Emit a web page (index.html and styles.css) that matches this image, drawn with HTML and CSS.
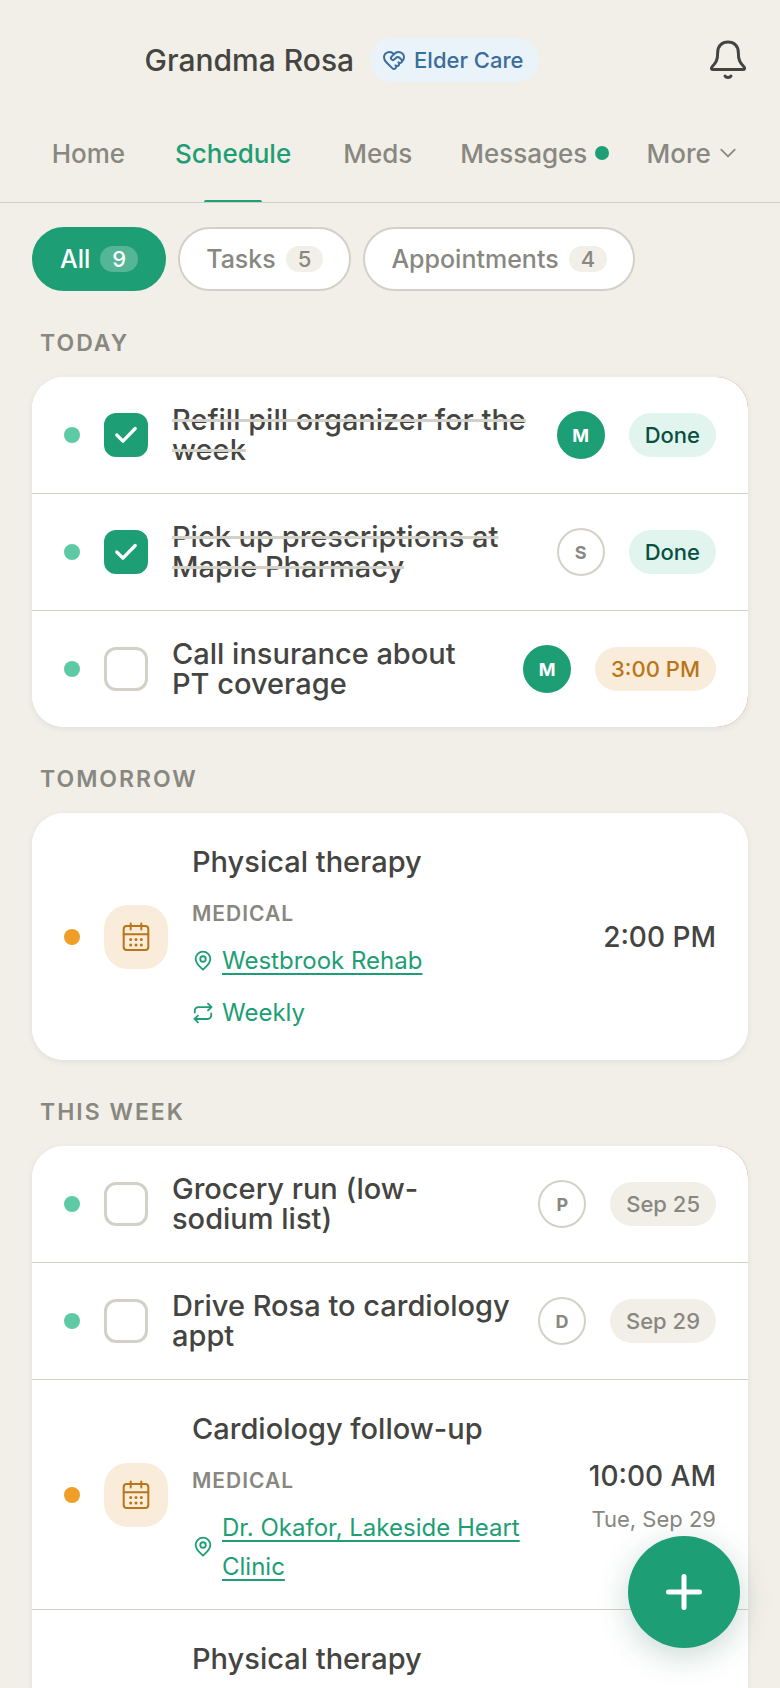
FILE: index.html
```
<!DOCTYPE html>
<html lang="en">
<head>
    <meta charset="UTF-8">
    <meta name="viewport" content="width=device-width, initial-scale=1.0">
    <title>Schedule - Grandma Rosa</title>
    <link rel="stylesheet" href="styles.css">
</head>
<body>
    <!-- shared icons -->
    <svg class="sprite" aria-hidden="true">
        <symbol id="i-check" viewBox="0 0 24 24"><path d="M3.500 12l5.700 5.700L20.500 6"/></symbol>
        <symbol id="i-calendar" viewBox="0 0 32 32">
            <rect x="3.700" y="5" width="24.600" height="24" rx="3"/>
            <path d="M3.700 13.300h24.600M10.700 2.500v6M21.300 2.500v6"/>
            <path class="dots" d="M10.700 18.500h.01M16 18.500h.01M21.300 18.500h.01M10.700 24h.01M16 24h.01M21.300 24h.01"/>
        </symbol>
        <symbol id="i-pin" viewBox="0 0 20 24">
            <path d="M10 21.500C7.500 19 2 15 2 9.800a8 8 0 0 1 16 0C18 15 12.500 19 10 21.500z"/>
            <circle cx="10" cy="9.800" r="3"/>
        </symbol>
        <symbol id="i-repeat" viewBox="0 0 24 24">
            <path d="M3 11.500V9.500a4 4 0 0 1 4-4h14M17.500 1.800L21.300 5.500l-3.800 3.700M21 12.500v2a4 4 0 0 1-4 4H3M6.500 22.200L2.700 18.500l3.800-3.700"/>
        </symbol>
    </svg>

    <header class="topbar">
        <div class="person">
            <h1>Grandma Rosa</h1>
            <span class="care-tag">
                <svg viewBox="0 0 24 24"><path d="M19.414 14.414C21 12.828 22 11.500 22 9.500a5.500 5.500 0 0 0-9.591-3.676.6.6 0 0 1-.818.001A5.500 5.500 0 0 0 2 9.500c0 2.300 1.500 4 3 5.500l5.535 5.362a2 2 0 0 0 2.879.052 2.120 2.120 0 0 0-.004-3 2.124 2.124 0 1 0 3-3 2.124 2.124 0 0 0 3.004 0 2 2 0 0 0 0-2.828l-1.881-1.882a2.410 2.410 0 0 0-3.409 0l-1.710 1.710a2 2 0 0 1-2.828 0 2 2 0 0 1 0-2.828l2.823-2.762"/></svg>
                Elder Care
            </span>
        </div>
        <button class="bell" aria-label="Notifications">
            <svg viewBox="0 0 44 44"><path d="M22 4c-6.200 0-10.300 4.200-10.300 10.200 0 8.300-2 10.800-5.400 14.300-1.600 1.700-1 3 .9 3h29.600c1.900 0 2.500-1.300.9-3-3.400-3.500-5.400-6-5.400-14.300C32.300 8.200 28.200 4 22 4zM19 38c1.200 2 4.800 2 6 0"/></svg>
        </button>
    </header>

    <nav class="tabs">
        <a href="#home">Home</a>
        <a href="#schedule" class="active">Schedule</a>
        <a href="#meds">Meds</a>
        <a href="#messages">Messages <span class="unread"></span></a>
        <a href="#more">More <svg class="chevron" viewBox="0 0 16 16"><path d="M2 5l6 6 6-6"/></svg></a>
    </nav>

    <main>
        <div class="chips">
            <button class="chip active">All <span class="count">9</span></button>
            <button class="chip">Tasks <span class="count">5</span></button>
            <button class="chip">Appointments <span class="count">4</span></button>
        </div>

        <section>
            <h2>TODAY</h2>
            <div class="card swipeable">
                <div class="row task">
                    <span class="dot"></span>
                    <label class="check"><input type="checkbox" id="t1" checked><svg><use href="#i-check"/></svg></label>
                    <label class="title done" for="t1">Refill pill organizer for the week</label>
                    <span class="avatar me">M</span>
                    <span class="pill green">Done</span>
                </div>
                <div class="row task">
                    <span class="dot"></span>
                    <label class="check"><input type="checkbox" id="t2" checked><svg><use href="#i-check"/></svg></label>
                    <label class="title done" for="t2">Pick up prescriptions at Maple Pharmacy</label>
                    <span class="avatar">S</span>
                    <span class="pill green">Done</span>
                </div>
                <div class="row task">
                    <span class="dot"></span>
                    <label class="check"><input type="checkbox" id="t3"><svg><use href="#i-check"/></svg></label>
                    <label class="title" for="t3">Call insurance about PT coverage</label>
                    <span class="avatar me">M</span>
                    <span class="pill amber">3:00 PM</span>
                </div>
            </div>
        </section>

        <section>
            <h2>TOMORROW</h2>
            <div class="card">
                <div class="row visit">
                    <span class="dot orange"></span>
                    <span class="tile"><svg><use href="#i-calendar"/></svg></span>
                    <div class="info">
                        <h3>Physical therapy</h3>
                        <p class="kind">MEDICAL</p>
                        <p class="place"><svg><use href="#i-pin"/></svg><a href="#map">Westbrook Rehab</a></p>
                        <p class="repeat"><svg><use href="#i-repeat"/></svg>Weekly</p>
                    </div>
                    <div class="when"><strong>2:00 PM</strong></div>
                </div>
            </div>
        </section>

        <section>
            <h2>THIS WEEK</h2>
            <div class="card swipeable">
                <div class="row task">
                    <span class="dot"></span>
                    <label class="check"><input type="checkbox" id="t4"><svg><use href="#i-check"/></svg></label>
                    <label class="title" for="t4">Grocery run (low-sodium list)</label>
                    <span class="avatar">P</span>
                    <span class="pill">Sep 25</span>
                </div>
                <div class="row task">
                    <span class="dot"></span>
                    <label class="check"><input type="checkbox" id="t5"><svg><use href="#i-check"/></svg></label>
                    <label class="title" for="t5">Drive Rosa to cardiology appt</label>
                    <span class="avatar">D</span>
                    <span class="pill">Sep 29</span>
                </div>
                <div class="row visit">
                    <span class="dot orange"></span>
                    <span class="tile"><svg><use href="#i-calendar"/></svg></span>
                    <div class="info">
                        <h3>Cardiology follow-up</h3>
                        <p class="kind">MEDICAL</p>
                        <p class="place"><svg><use href="#i-pin"/></svg><a href="#map">Dr. Okafor, Lakeside Heart Clinic</a></p>
                    </div>
                    <div class="when"><strong>10:00 AM</strong><span>Tue, Sep 29</span></div>
                </div>
                <div class="row visit">
                    <span class="dot orange"></span>
                    <span class="tile"><svg><use href="#i-calendar"/></svg></span>
                    <div class="info">
                        <h3>Physical therapy</h3>
                        <p class="kind">MEDICAL</p>
                        <p class="place"><svg><use href="#i-pin"/></svg><a href="#map">Westbrook Rehab</a></p>
                        <p class="repeat"><svg><use href="#i-repeat"/></svg>Weekly</p>
                    </div>
                    <div class="when"><strong>2:00 PM</strong></div>
                </div>
            </div>
        </section>
    </main>

    <button class="fab" aria-label="Add"><svg viewBox="0 0 36 36"><path d="M18 2.500v31M2.500 18h31"/></svg></button>
</body>
</html>
```
FILE: styles.css
```
* {
    box-sizing: border-box;
}
body {
    margin: 0;
    height: 100vh;
    display: flex;
    flex-direction: column;
    background-color: #f1efe8;
    color: #444441;
    font-family: Inter, "Liberation Sans", sans-serif;
    font-variation-settings: "opsz" 14;
    font-size: 24px;
}
h1, h2, h3, p {
    margin: 0;
    font-weight: 500;
}
button {
    font: inherit;
    font-variation-settings: inherit;
    border: none;
    cursor: pointer;
}
svg {
    flex: none;
    fill: none;
    stroke: currentColor;
    stroke-width: 2;
    stroke-linecap: round;
    stroke-linejoin: round;
}
.sprite {
    display: none;
}
.topbar {
    display: flex;
    align-items: center;
    padding: 16px 8px 0 0;
    flex: none;
}
.person {
    flex: 1;
    display: flex;
    align-items: center;
    justify-content: center;
    gap: 16px;
}
h1 {
    font-size: 30px;
}
.care-tag {
    display: flex;
    align-items: center;
    gap: 8px;
    height: 44px;
    padding: 0 16px 0 12px;
    border-radius: 22px;
    background-color: #eaf2fa;
    color: #3a6d99;
    font-size: 22px;
    font-weight: 500;
}
.care-tag svg {
    width: 24px;
    height: 24px;
}
.bell {
    display: flex;
    align-items: center;
    justify-content: center;
    width: 88px;
    height: 88px;
    padding: 0;
    background: none;
    color: #444441;
}
.bell svg {
    width: 44px;
    height: 44px;
    stroke-width: 3;
}
.tabs {
    display: flex;
    flex: none;
    height: 99px;
    padding: 0 16px;
    border-bottom: 1px solid #d3d1c7;
}
.tabs a {
    flex: 1 1 0;
    display: flex;
    align-items: center;
    justify-content: center;
    gap: 8px;
    padding: 0 10px;
    position: relative;
    color: #888780;
    text-decoration: none;
    font-size: 26px;
    font-weight: 500;
}
.tabs .active {
    color: #1d9e75;
}
.tabs .active::after {
    content: "";
    position: absolute;
    left: 30%;
    right: 30%;
    bottom: 0;
    height: 2px;
    border-radius: 2px 2px 0 0;
    background-color: #1d9e75;
}
.unread {
    width: 14px;
    height: 14px;
    border-radius: 50%;
    background-color: #1d9e75;
}
.chevron {
    width: 18px;
    height: 18px;
    stroke-width: 1.600;
}
main {
    flex: 1;
    min-height: 0;
    overflow-y: auto;
    scrollbar-width: none;
    padding: 24px 32px;
}
.chips {
    display: flex;
    gap: 12px;
}
.chip {
    display: flex;
    align-items: center;
    gap: 10px;
    height: 64px;
    padding: 0 26px;
    border: 2px solid #d3d1c7;
    border-radius: 32px;
    background-color: #fff;
    color: #888780;
    font-size: 25px;
    font-weight: 500;
}
.chip.active {
    border-color: #1d9e75;
    background-color: #1d9e75;
    color: #fff;
}
.count {
    padding: 0 12px;
    border-radius: 13px;
    background-color: #f1efe8;
    font-size: 22px;
    line-height: 26px;
}
.chip.active .count {
    background-color: rgba(255, 255, 255, 0.25);
}
h2 {
    padding: 32px 8px 14px;
    font-size: 23px;
    font-weight: 600;
    line-height: 40px;
    letter-spacing: 2px;
    color: #888780;
}
.card {
    overflow: hidden;
    border-radius: 32px;
    background-color: #fff;
    box-shadow: 0 2px 6px rgba(8, 80, 65, 0.08);
}
.swipeable {
    background-image: linear-gradient(to right, #fff 50%, #e24b4a 50%);
}
.row {
    display: flex;
    align-items: center;
    gap: 24px;
    padding: 28px 32px;
    background-color: #fff;
}
.row + .row {
    border-top: 1px solid #d3d1c7;
}
.visit {
    padding: 24px 32px 23px;
}
.dot {
    flex: none;
    width: 16px;
    height: 16px;
    border-radius: 50%;
    background-color: #5dcaa5;
}
.dot.orange {
    background-color: #ef9f27;
}
.check {
    flex: none;
    display: grid;
    width: 44px;
    height: 44px;
}
.check input {
    grid-area: 1 / 1;
    appearance: none;
    width: 44px;
    height: 44px;
    margin: 0;
    border: 3px solid #d3d1c7;
    border-radius: 12px;
    background-color: #fff;
}
.check input:checked {
    border-color: #1d9e75;
    background-color: #1d9e75;
}
.check svg {
    grid-area: 1 / 1;
    place-self: center;
    width: 26px;
    height: 26px;
    color: #fff;
    stroke-width: 3;
}
.title {
    flex: 1;
    font-size: 29px;
    font-weight: 500;
    line-height: 30px;
}
.title.done {
    text-decoration: line-through #d3d1c7 3px;
}
.avatar {
    flex: none;
    display: flex;
    align-items: center;
    justify-content: center;
    width: 48px;
    height: 48px;
    border: 2px solid #d3d1c7;
    border-radius: 50%;
    font-size: 18px;
    font-weight: 700;
    color: #888780;
}
.avatar.me {
    border-color: #1d9e75;
    background-color: #1d9e75;
    color: #fff;
}
.pill {
    flex: none;
    padding: 0 16px;
    border-radius: 22px;
    background-color: #f1efe8;
    color: #888780;
    font-size: 22px;
    font-weight: 500;
    line-height: 44px;
}
.pill.green {
    background-color: #e1f5ee;
    color: #085041;
}
.pill.amber {
    background-color: #faecda;
    color: #ba7517;
}
.tile {
    flex: none;
    display: flex;
    align-items: center;
    justify-content: center;
    width: 64px;
    height: 64px;
    border-radius: 24px;
    background-color: #faecda;
    color: #ba7517;
}
.tile svg {
    width: 32px;
    height: 32px;
}
.info {
    flex: 1;
    display: flex;
    flex-direction: column;
    gap: 9px;
}
h3 {
    font-size: 29px;
    line-height: 50px;
}
.kind {
    font-size: 21px;
    font-weight: 600;
    line-height: 36px;
    letter-spacing: 1px;
    color: #888780;
}
.place, .repeat {
    display: flex;
    align-items: center;
    gap: 8px;
    color: #1d9e75;
    font-weight: 400;
    line-height: 39px;
}
.repeat {
    line-height: 48px;
}
.place svg, .repeat svg {
    width: 22px;
    height: 22px;
}
.place a {
    color: inherit;
    text-decoration-thickness: 2px;
    text-underline-offset: 4px;
}
.when {
    display: flex;
    flex-direction: column;
    align-items: flex-end;
    gap: 4px;
}
.when strong {
    font-size: 28px;
    font-weight: 500;
    line-height: 44px;
}
.when span {
    font-size: 22px;
    line-height: 35px;
    color: #888780;
}
.fab {
    position: fixed;
    right: 40px;
    bottom: 40px;
    display: flex;
    align-items: center;
    justify-content: center;
    width: 112px;
    height: 112px;
    padding: 0;
    border-radius: 50%;
    background-color: #1d9e75;
    color: #fff;
    box-shadow: 0 8px 32px rgba(8, 80, 65, 0.22);
}
.fab svg {
    width: 36px;
    height: 36px;
    stroke-width: 5;
}
.dots {
    stroke-width: 3;
}
```
